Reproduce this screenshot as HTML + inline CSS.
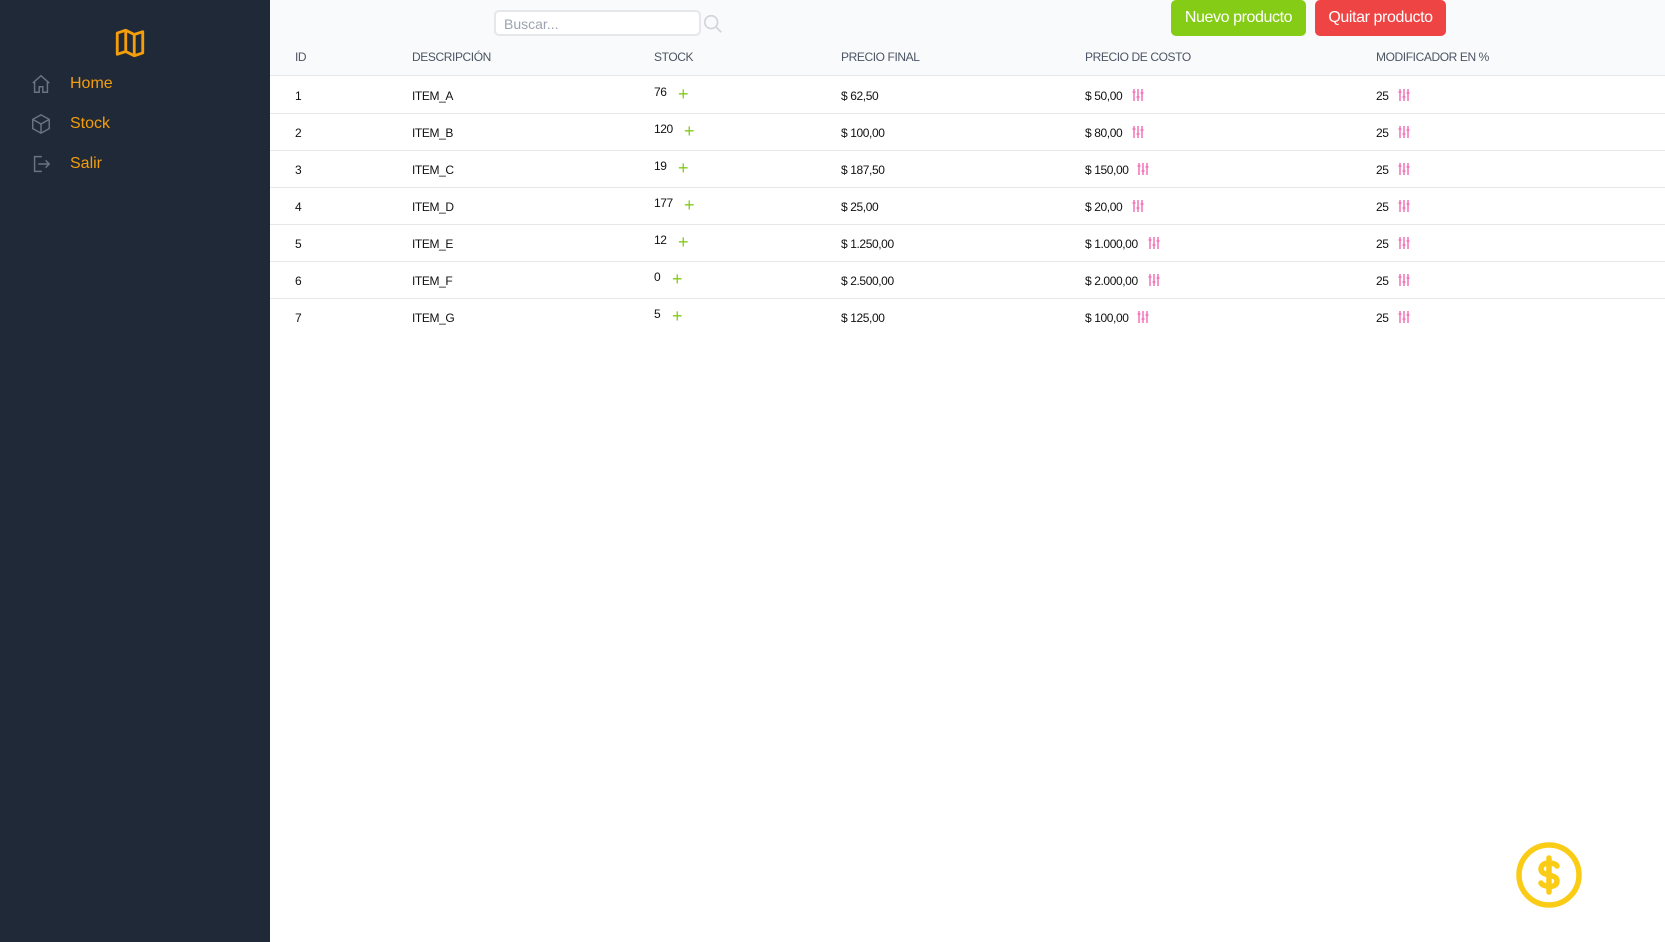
<!DOCTYPE html>
<html><head><meta charset="utf-8"><style>
*{margin:0;padding:0;box-sizing:border-box}
body{width:1665px;height:942px;overflow:hidden;background:#fff;font-family:"Liberation Sans",sans-serif;position:relative}
.side{position:absolute;left:0;top:0;width:270px;height:942px;background:#1f2937}
.nav{position:absolute;left:30px;display:flex;align-items:center;color:#f59e0b;font-size:16px}
.nav svg{margin-right:18px}
.top{position:absolute;left:270px;top:0;right:0;height:76px;background:#f9fafb;border-bottom:1px solid #e5e7eb}
.search{position:absolute;left:494px;top:10px;width:207px;height:26px;border:2px solid #e5e7eb;border-radius:5px;background:#fff;font-size:14px;color:#9ca3af;padding:4px 8px}
.btn{position:absolute;top:0;height:36px;border-radius:5px;color:#fff;font-size:16px;line-height:36px;text-align:center;letter-spacing:-0.4px}
.h{position:absolute;top:50px;font-size:12px;color:#4b5563;letter-spacing:-0.4px}
.row{position:absolute;left:270px;right:0;height:37px;border-bottom:1px solid #e5e7eb;font-size:12px;color:#111;letter-spacing:-0.4px}
.row.last{border-bottom:none}
.row span{position:absolute;top:12px}
.plus{color:#84cc16;font-size:18px;top:7px!important}
.adj{top:11px!important}
</style></head><body>
<div class="side">
<svg style="position:absolute;left:112px;top:26px" width="36" height="34" viewBox="0 0 24 24" fill="none" stroke="#f59e0b" stroke-width="2" stroke-linejoin="round"><path d="M3 5l6-2 6 3 6-2v15l-6 2-6-3-6 2z M9 3v15 M15 6v15"/></svg>
<div class="nav" style="top:73px"><svg width="22" height="22" viewBox="0 0 24 24" fill="none" stroke="#6b7280" stroke-width="1.6"><path d="M3 11l9-8 9 8M5 9v12h5v-6h4v6h5V9"/></svg>Home</div>
<div class="nav" style="top:113px"><svg width="22" height="22" viewBox="0 0 24 24" fill="none" stroke="#6b7280" stroke-width="1.6"><path d="M12 2l9 5v10l-9 5-9-5V7z M3 7l9 5 9-5 M12 12v10"/></svg>Stock</div>
<div class="nav" style="top:153px"><svg width="22" height="22" viewBox="0 0 24 24" fill="none" stroke="#6b7280" stroke-width="1.6"><path d="M13 4H5v16h8 M9 12h12 M17 8l4 4-4 4"/></svg>Salir</div>
</div>
<div class="top"></div>
<div class="search">Buscar...</div>
<svg style="position:absolute;left:702px;top:13px" width="22" height="22" viewBox="0 0 24 24" fill="none" stroke="#d1d5db" stroke-width="1.8"><circle cx="10" cy="10" r="7"/><path d="M15 15l6 6"/></svg>
<div class="btn" style="left:1171px;width:135px;background:#84cc16">Nuevo producto</div>
<div class="btn" style="left:1315px;width:131px;background:#ef4444">Quitar producto</div>
<div class="h" style="left:295px">ID</div><div class="h" style="left:412px">DESCRIPCIÓN</div><div class="h" style="left:654px">STOCK</div><div class="h" style="left:841px">PRECIO FINAL</div><div class="h" style="left:1085px">PRECIO DE COSTO</div><div class="h" style="left:1376px">MODIFICADOR EN %</div>
<div id="rows"></div>
<svg style="position:absolute;left:1515px;top:841px" width="68" height="68" viewBox="0 0 68 68" fill="none" stroke="#facc15" stroke-width="5.5" stroke-linecap="round"><circle cx="34" cy="34" r="30"/><path d="M42 25c-2-4-16-5-16 3s16 4 16 12-14 6-16 2 M34 17v34"/></svg>
<script>
var d=[[1,"ITEM_A",76,"62,50","50,00"],[2,"ITEM_B",120,"100,00","80,00"],[3,"ITEM_C",19,"187,50","150,00"],[4,"ITEM_D",177,"25,00","20,00"],[5,"ITEM_E",12,"1.250,00","1.000,00"],[6,"ITEM_F",0,"2.500,00","2.000,00"],[7,"ITEM_G",5,"125,00","100,00"]];
var adj='<svg width="12" height="14" viewBox="0 0 12 14" stroke="#f472b6" stroke-width="1.5" fill="none"><path d="M2 1v12M6 1v12M10 1v12M0.5 4h3M4.5 9h3M8.5 5h3"/></svg>';
var h="";d.forEach(function(r,i){var sw=String(r[2]).length*6+12,cw=("$ "+r[4]).length*5.5+8;
h+='<div class="row'+(i==6?' last':'')+'" style="top:'+(77+i*37)+'px"><span style="left:25px">'+r[0]+'</span><span style="left:142px">'+r[1]+'</span><span style="left:384px;top:8px">'+r[2]+'</span><span class="plus" style="left:'+(384+sw)+'px">+</span><span style="left:571px">$ '+r[3]+'</span><span style="left:815px">$ '+r[4]+'</span><span class="adj" style="left:'+(815+cw)+'px">'+adj+'</span><span style="left:1106px">25</span><span class="adj" style="left:1128px">'+adj+'</span></div>';});
document.getElementById("rows").innerHTML=h;
</script>
</body></html>
